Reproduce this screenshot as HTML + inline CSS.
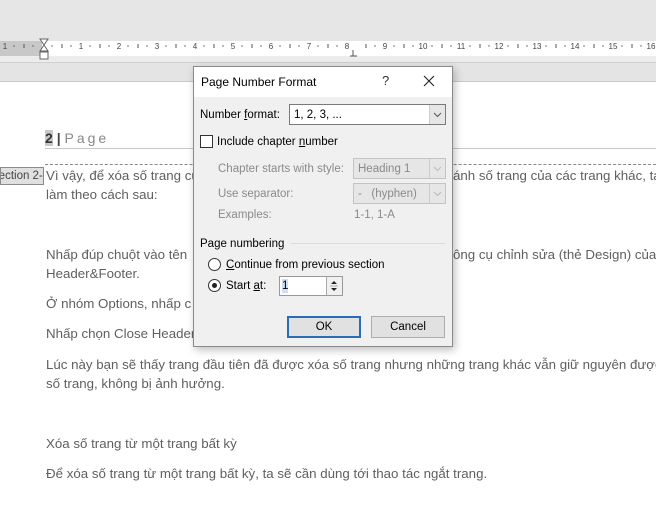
<!DOCTYPE html>
<html><head><meta charset="utf-8"><style>
*{margin:0;padding:0;box-sizing:border-box}
body{width:656px;height:529px;overflow:hidden;background:#fff;position:relative;font-family:"Liberation Sans",sans-serif}
.a{position:absolute;white-space:nowrap}
.t{font-size:13.3px;color:#5f5f5f;letter-spacing:0;line-height:16px}
.d{font-size:11.5px;color:#000;line-height:14px}
.g{color:#8a8a8a}
u{text-decoration:underline}
</style></head><body>
<div class="a" style="left:0;top:0;width:656px;height:41px;background:#e6e6e6"></div>
<div class="a" style="left:0;top:41px;width:656px;height:15px;background:#fff"></div>
<div class="a" style="left:0;top:41px;width:42px;height:15px;background:#c8c8c8"></div>
<div class="a" style="left:0;top:56px;width:656px;height:6px;background:#ececec"></div>
<div class="a" style="left:0;top:62px;width:656px;height:20px;background:#e4e4e4;border-top:1px solid #d0d0d0;border-bottom:1px solid #c8c8c8"></div>
<svg class="a" style="left:0;top:38px" width="656" height="24">
<g font-family="Liberation Sans" font-size="8" fill="#444" text-anchor="middle">
<text x="5" y="11">1</text>
<text x="81" y="11">1</text><text x="119" y="11">2</text><text x="157" y="11">3</text><text x="195" y="11">4</text><text x="233" y="11">5</text><text x="271" y="11">6</text><text x="309" y="11">7</text><text x="347" y="11">8</text><text x="385" y="11">9</text><text x="423" y="11">10</text><text x="461" y="11">11</text><text x="499" y="11">12</text><text x="537" y="11">13</text><text x="575" y="11">14</text><text x="613" y="11">15</text><text x="651" y="11">16</text>
</g>
<g stroke="#555" stroke-width="1">
<path d="M24 6v4M62 6v4M100 6v4M138 6v4M176 6v4M214 6v4M252 6v4M290 6v4M328 6v4M366 6v4M404 6v4M442 6v4M480 6v4M518 6v4M556 6v4M594 6v4M632 6v4"/>
</g>
<g fill="#555"><circle cx="14" cy="8" r=".7"/><circle cx="33" cy="8" r=".7"/><circle cx="52" cy="8" r=".7"/><circle cx="71" cy="8" r=".7"/><circle cx="90" cy="8" r=".7"/><circle cx="109" cy="8" r=".7"/><circle cx="128" cy="8" r=".7"/><circle cx="147" cy="8" r=".7"/><circle cx="166" cy="8" r=".7"/><circle cx="185" cy="8" r=".7"/><circle cx="204" cy="8" r=".7"/><circle cx="223" cy="8" r=".7"/><circle cx="242" cy="8" r=".7"/><circle cx="261" cy="8" r=".7"/><circle cx="280" cy="8" r=".7"/><circle cx="299" cy="8" r=".7"/><circle cx="318" cy="8" r=".7"/><circle cx="337" cy="8" r=".7"/><circle cx="375" cy="8" r=".7"/><circle cx="394" cy="8" r=".7"/><circle cx="413" cy="8" r=".7"/><circle cx="432" cy="8" r=".7"/><circle cx="451" cy="8" r=".7"/><circle cx="470" cy="8" r=".7"/><circle cx="489" cy="8" r=".7"/><circle cx="508" cy="8" r=".7"/><circle cx="527" cy="8" r=".7"/><circle cx="546" cy="8" r=".7"/><circle cx="565" cy="8" r=".7"/><circle cx="584" cy="8" r=".7"/><circle cx="603" cy="8" r=".7"/><circle cx="622" cy="8" r=".7"/><circle cx="641" cy="8" r=".7"/></g>
<path d="M40 1h8l-4 6zM40 13h8l-4-6z" fill="#fff" stroke="#666"/>
<rect x="40" y="14" width="8" height="7" fill="#fff" stroke="#666"/>
<path d="M353 12v6M350 18h7" stroke="#555"/>
</svg>
<div class="a" style="left:45px;top:130px;font-size:14px;color:#444;letter-spacing:0"><b style="background:#c8c8c8;color:#333">2</b> <b>|</b> <span style="color:#888;letter-spacing:3px">Page</span></div>
<div class="a" style="left:45px;top:148px;width:611px;border-top:1px solid #c8c8c8"></div>
<div class="a" style="left:45px;top:164px;width:611px;border-top:1px dashed #888"></div>
<div class="a t" style="left:0;top:167px;width:44px;height:18px;background:#e0e0e0;border:1px solid #8a8a8a;font-size:11.5px;color:#444;overflow:hidden;text-indent:-10px">Section 2-</div>
<div class="a t" style="left:46px;top:168px">Vì vậy, để xóa số trang của</div>
<div class="a t" style="left:453px;top:168px">ánh số trang của các trang khác, ta</div>
<div class="a t" style="left:46px;top:187px">làm theo cách sau:</div>
<div class="a t" style="left:46px;top:247px">Nhấp đúp chuột vào tên</div>
<div class="a t" style="left:453px;top:247px">ông cụ chỉnh sửa (thẻ Design) của</div>
<div class="a t" style="left:46px;top:266px">Header&amp;Footer.</div>
<div class="a t" style="left:46px;top:296px">Ở nhóm Options, nhấp c</div>
<div class="a t" style="left:46px;top:326px">Nhấp chọn Close Header</div>
<div class="a t" style="left:46px;top:357px">Lúc này bạn sẽ thấy trang đầu tiên đã được xóa số trang nhưng những trang khác vẫn giữ nguyên được</div>
<div class="a t" style="left:46px;top:376px">số trang, không bị ảnh hưởng.</div>
<div class="a t" style="left:46px;top:436px">Xóa số trang từ một trang bất kỳ</div>
<div class="a t" style="left:46px;top:466px">Để xóa số trang từ một trang bất kỳ, ta sẽ cần dùng tới thao tác ngắt trang.</div>

<div class="a" style="left:193px;top:66px;width:260px;height:281px;background:#f0f0f0;border:1px solid #8a8a8a;box-shadow:2px 3px 8px rgba(0,0,0,.25)">
<div class="a" style="left:0;top:0;width:258px;height:30px;background:#fff"></div>
<div class="a d" style="left:7px;top:8px;font-size:12px">Page Number Format</div>
<div class="a d" style="left:188px;top:7px;font-size:13px;color:#333">?</div>
<svg class="a" style="left:229px;top:8px" width="12" height="12"><path d="M1 1l10 10M11 1L1 11" stroke="#222" stroke-width="1.1"/></svg>
<div class="a d" style="left:6px;top:41px">Number <u>f</u>ormat:</div>
<div class="a" style="left:95px;top:37px;width:157px;height:21px;background:#fff;border:1px solid #7a7a7a"></div>
<div class="a d" style="left:100px;top:41px">1, 2, 3, ...</div>
<div class="a" style="left:235px;top:38px;width:16px;height:19px;background:#e6e6e6;border-left:1px solid #ccc"></div>
<svg class="a" style="left:239px;top:45px" width="9" height="6"><path d="M1 1l3.5 3.5L8 1" stroke="#555" fill="none"/></svg>
<div class="a" style="left:6px;top:68px;width:13px;height:13px;background:#fff;border:1px solid #333"></div>
<div class="a d" style="left:23px;top:68px">Include chapter <u>n</u>umber</div>
<div class="a d g" style="left:24px;top:95px">Chapter starts with style:</div>
<div class="a" style="left:159px;top:91px;width:93px;height:21px;background:#e6e6e6;border:1px solid #c4c4c4"></div>
<div class="a d g" style="left:164px;top:95px">Heading 1</div>
<svg class="a" style="left:239px;top:99px" width="9" height="6"><path d="M1 1l3.5 3.5L8 1" stroke="#bbb" fill="none"/></svg>
<div class="a" style="left:235px;top:92px;width:1px;height:19px;background:#ccc"></div>
<div class="a d g" style="left:24px;top:120px">Use separator:</div>
<div class="a" style="left:159px;top:116px;width:93px;height:21px;background:#e6e6e6;border:1px solid #c4c4c4"></div>
<div class="a d g" style="left:164px;top:120px">-&nbsp;&nbsp; (hyphen)</div>
<div class="a" style="left:235px;top:117px;width:1px;height:19px;background:#ccc"></div>
<svg class="a" style="left:239px;top:124px" width="9" height="6"><path d="M1 1l3.5 3.5L8 1" stroke="#bbb" fill="none"/></svg>
<div class="a d g" style="left:24px;top:141px">Examples:</div>
<div class="a d g" style="left:160px;top:141px">1-1, 1-A</div>
<div class="a d" style="left:6px;top:170px">Page numbering</div>
<div class="a" style="left:96px;top:176px;width:156px;border-top:1px solid #dcdcdc"></div>
<div class="a" style="left:14px;top:191px;width:13px;height:13px;border-radius:50%;background:#fff;border:1px solid #333"></div>
<div class="a d" style="left:32px;top:191px"><u>C</u>ontinue from previous section</div>
<div class="a" style="left:14px;top:212px;width:13px;height:13px;border-radius:50%;background:#fff;border:1px solid #333"></div>
<div class="a" style="left:18px;top:216px;width:5px;height:5px;border-radius:50%;background:#222"></div>
<div class="a d" style="left:32px;top:212px">Start <u>a</u>t:</div>
<div class="a" style="left:85px;top:209px;width:64px;height:20px;background:#fff;border:1px solid #999"></div>
<div class="a d" style="left:88px;top:212px;background:#cfe0f3">1</div>
<div class="a" style="left:132px;top:210px;width:16px;height:18px;background:#f0f0f0;border-left:1px solid #aaa"></div>
<svg class="a" style="left:136px;top:212px" width="8" height="14"><path d="M1 5l3-3 3 3zM1 9l3 3 3-3z" fill="#222"/><path d="M0 7h8" stroke="#aaa"/></svg>
<div class="a" style="left:93px;top:249px;width:74px;height:22px;background:#e1e1e1;border:2px solid #2a6db5"></div>
<div class="a d" style="left:93px;top:253px;width:74px;text-align:center">OK</div>
<div class="a" style="left:177px;top:249px;width:74px;height:22px;background:#e1e1e1;border:1px solid #adadad"></div>
<div class="a d" style="left:177px;top:253px;width:74px;text-align:center">Cancel</div>
</div>
</body></html>
